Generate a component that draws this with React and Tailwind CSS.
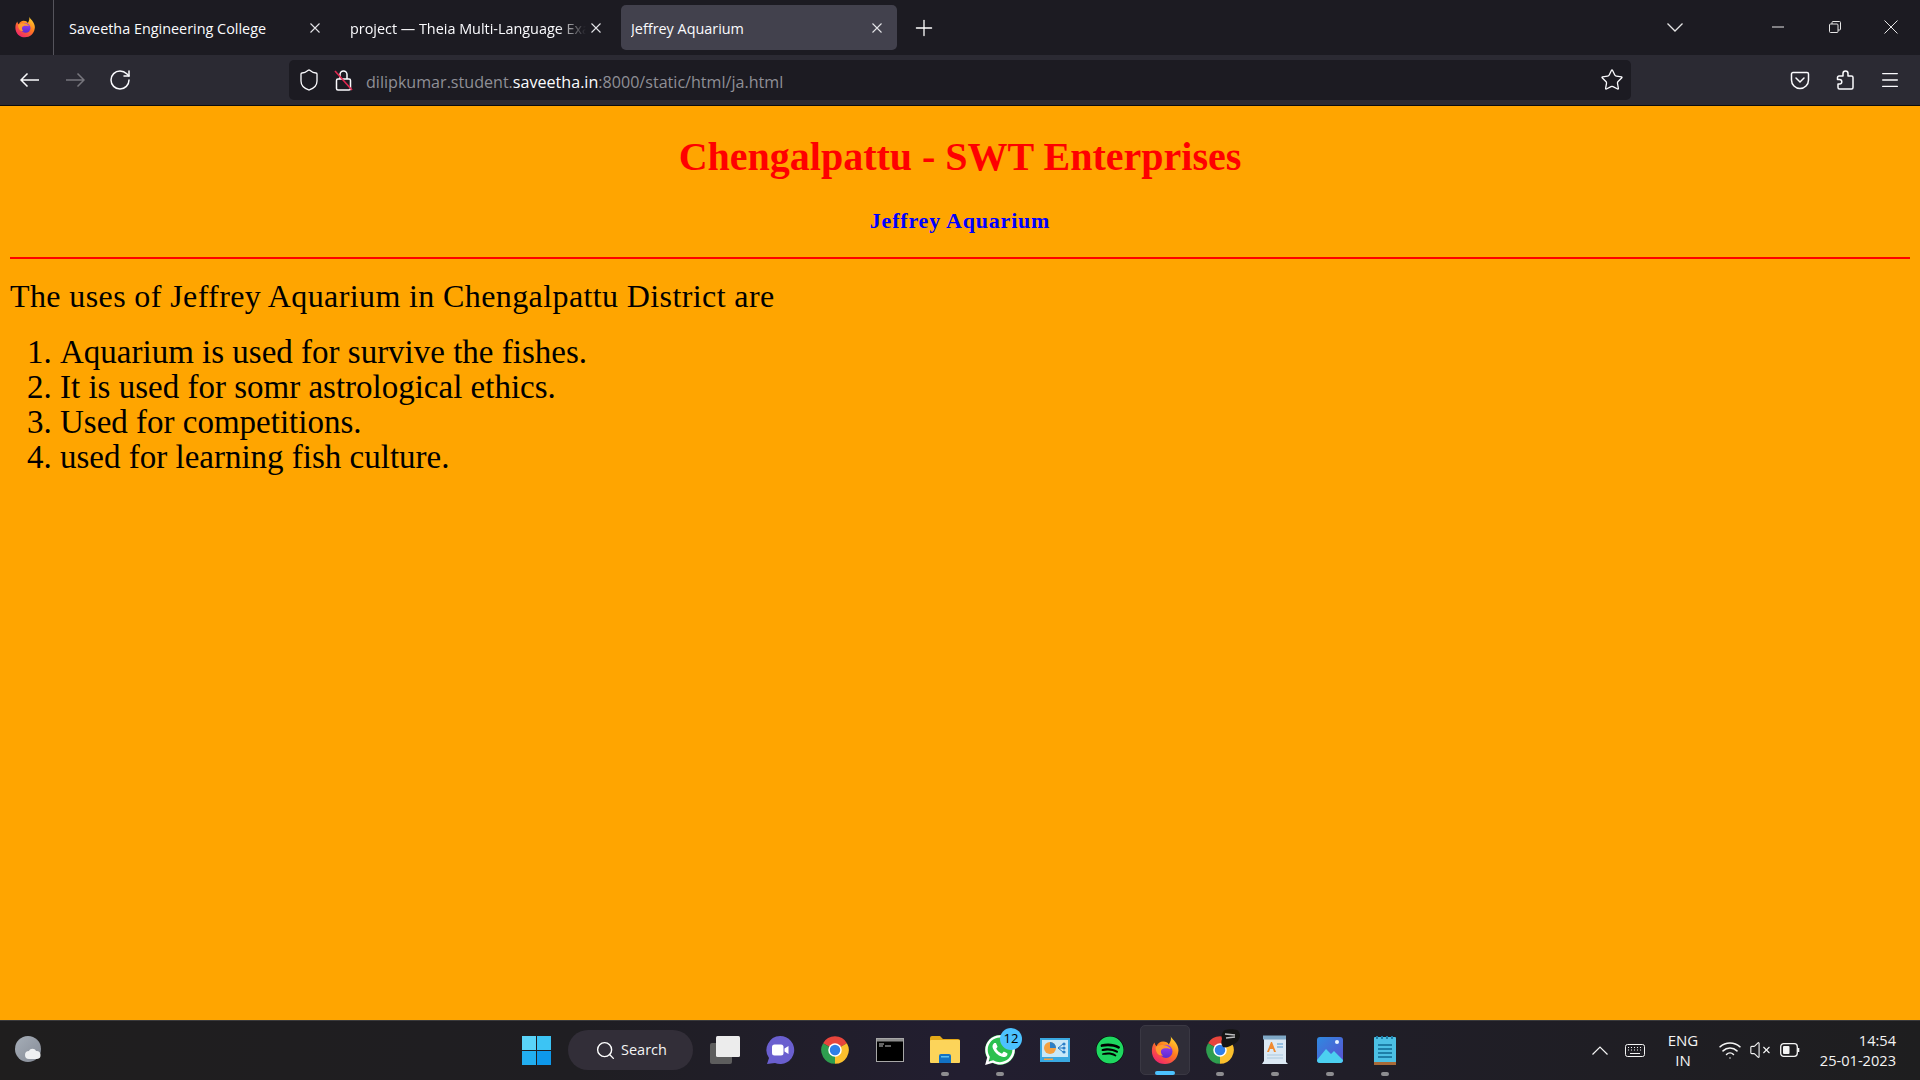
import { FaWhatsapp, FaSpotify } from 'react-icons/fa';
import { Plus, RotateCw, Shield, Star, Menu, Search, Wifi, VolumeX } from 'lucide-react';

const ui = "font-['Open_Sans','Noto_Sans',sans-serif]";

function Firefox({ size = 24 }) {
  return (
    <svg width={size} height={size} viewBox="0 0 32 32">
      <defs>
        <linearGradient id="ffOuter" x1="0.8" y1="0.05" x2="0.2" y2="0.95">
          <stop offset="0" stopColor="#ffd12e" />
          <stop offset="0.45" stopColor="#ff7a1f" />
          <stop offset="1" stopColor="#f0246c" />
        </linearGradient>
        <linearGradient id="ffInner" x1="0.5" y1="0" x2="0.5" y2="1">
          <stop offset="0" stopColor="#9a3cf0" />
          <stop offset="1" stopColor="#5a2bd0" />
        </linearGradient>
      </defs>
      <path d="M22 1c1 3 4 4 6 8 2 3 3 7 2 10-1 7-7 12-14 12C8 31 2 25 2 17c0-4 1-7 3-9 0 2 1 3 2 4 1-3 4-5 7-5 3 0 5 1 6 3 2-3 3-6 2-9z" fill="url(#ffOuter)" />
      <circle cx="17" cy="17.5" r="7" fill="url(#ffInner)" />
      <path d="M6 13c2-2 6-3 9-2 3 0 6 2 7 4-2-1-4-1-6-1-2 0-3 1-4 2-1 2 0 5 2 6-3 0-6-1-7-4-1-2-1-4-1-5z" fill="#ff9a2e" />
    </svg>
  );
}

function Chrome({ size = 30 }) {
  return (
    <svg width={size} height={size} viewBox="0 0 24 24">
      <path d="M12 12 L2.47 6.5 A11 11 0 0 1 21.53 6.5 Z" fill="#e8453c" />
      <path d="M12 12 L21.53 6.5 A11 11 0 0 1 12 23 Z" fill="#fbc02d" />
      <path d="M12 12 L12 23 A11 11 0 0 1 2.47 6.5 Z" fill="#2e9e4f" />
      <circle cx="12" cy="12" r="5.4" fill="#fff" />
      <circle cx="12" cy="12" r="4.2" fill="#2f7fe8" />
    </svg>
  );
}

function CloseIcon({ size = 10, color = '#e4e4e8' }) {
  return (
    <svg width={size} height={size} viewBox="0 0 10 10" stroke={color} strokeWidth="1.1">
      <path d="M0.5 0.5L9.5 9.5M9.5 0.5L0.5 9.5" />
    </svg>
  );
}

function TabItem({ title, active, fade }) {
  return (
    <div className={`flex items-center w-[276px] h-[45px] pl-[10px] pr-[10px] rounded-[5px] ${active ? 'bg-[#42414d]' : ''}`}>
      <span
        className={`pt-[2px] w-[236px] text-[14.4px] text-[#fbfbfe] whitespace-nowrap overflow-hidden ${fade ? '[mask-image:linear-gradient(90deg,#000_88%,transparent)]' : ''}`}
      >
        {title}
      </span>
      <span className="flex-1 flex justify-center">
        <CloseIcon />
      </span>
    </div>
  );
}

function TabStrip() {
  return (
    <div className="flex items-center h-[55px] bg-[#1c1b22] shrink-0">
      <div className="flex items-center justify-center w-[54px] h-full border-r border-[#55545c] pr-[4px] pb-[2px]">
        <Firefox size={22} />
      </div>
      <div className="flex items-center gap-[5px] ml-[5px]">
        <TabItem title="Saveetha Engineering College" />
        <TabItem title="project — Theia Multi-Language Exam" fade />
        <TabItem title="Jeffrey Aquarium" active />
      </div>
      <Plus size={26} strokeWidth={1.2} className="text-white ml-[14px]" />
      <div className="ml-auto flex items-center h-full pb-[1px]">
        <svg width="16" height="9" viewBox="0 0 16 9" fill="none" stroke="#e6e6e6" strokeWidth="1.3" className="mr-[89px]">
          <path d="M0.5 0.5L8 8L15.5 0.5" />
        </svg>
        <svg width="12" height="2" viewBox="0 0 12 2" stroke="#e6e6e6" strokeWidth="1" className="mr-[45px]">
          <path d="M0 1H12" />
        </svg>
        <svg width="12" height="12" viewBox="0 0 12 12" fill="none" stroke="#e6e6e6" strokeWidth="1" className="mr-[43px]">
          <rect x="0.5" y="3" width="8.5" height="8.5" rx="1" />
          <path d="M3 3V1.5a1 1 0 0 1 1-1h6.5a1 1 0 0 1 1 1V8a1 1 0 0 1-1 1H9" />
        </svg>
        <svg width="14" height="14" viewBox="0 0 14 14" stroke="#e6e6e6" strokeWidth="1" className="mr-[22px]">
          <path d="M0.5 0.5L13.5 13.5M13.5 0.5L0.5 13.5" />
        </svg>
      </div>
    </div>
  );
}

function NavArrow({ color, flip }) {
  return (
    <svg width="19" height="14" viewBox="0 0 19 14" fill="none" stroke={color} strokeWidth="1.5" className={flip ? 'rotate-180' : ''}>
      <path d="M1 7H19M7.5 0.5L1 7L7.5 13.5" />
    </svg>
  );
}

function Toolbar() {
  return (
    <div className="flex items-center h-[51px] bg-[#2b2a33] border-b border-[#0c0c0d] shrink-0 pb-[1px]">
      <div className="flex items-center ml-[7.5px]">
        <div className="flex justify-center w-[45px] pr-[2px]"><NavArrow color="#fbfbfe" /></div>
        <div className="flex justify-center w-[45px]"><NavArrow color="#77767d" flip /></div>
        <div className="flex justify-center w-[45px]"><RotateCw size={24} strokeWidth={1.5} className="text-[#fbfbfe]" /></div>
      </div>
      <div className="flex items-center w-[1342px] h-[40px] ml-[146.5px] rounded-[5px] bg-[#1c1b22]">
        <div className="flex justify-center w-[38px]"><Shield size={24} strokeWidth={1.3} className="text-[#fbfbfe] ml-[1px]" /></div>
        <div className="flex justify-center w-[34px]">
          <svg width="20" height="24" viewBox="0 0 20 24" fill="none">
            <rect x="2.5" y="11" width="14" height="11" rx="1.5" stroke="#fbfbfe" strokeWidth="1.5" />
            <path d="M6 11V6.5a3.5 3.5 0 0 1 7 0V11" stroke="#fbfbfe" strokeWidth="1.5" />
            <path d="M1 3l17 19" stroke="#e22850" strokeWidth="1.6" />
          </svg>
        </div>
        <div className={`pl-[5px] pt-[5px] text-[16.1px] text-[#8f8f96] whitespace-nowrap ${ui}`}>
          dilipkumar.student.<span className="text-[#fbfbfe]">saveetha.in</span>:8000/static/html/ja.html
        </div>
        <div className="ml-auto flex justify-center w-[38px]"><Star size={24} strokeWidth={1.3} className="text-[#fbfbfe]" /></div>
      </div>
      <div className="ml-auto flex items-center mr-[7.5px]">
        <div className="flex justify-center w-[45px]">
          <svg width="20" height="20" viewBox="0 0 20 20" fill="none" stroke="#fbfbfe" strokeWidth="1.5">
            <path d="M3 2.5h14A1.5 1.5 0 0 1 18.5 4v6a8.5 8.5 0 0 1-17 0V4A1.5 1.5 0 0 1 3 2.5z" />
            <path d="M6 8l4 4 4-4" strokeLinecap="round" />
          </svg>
        </div>
        <div className="flex justify-center w-[45px]">
          <svg width="18" height="20" viewBox="0 0 18 20" fill="none" stroke="#fbfbfe" strokeWidth="1.5" strokeLinejoin="round">
            <path d="M7 4.5V3.5a2.5 2.5 0 0 1 5 0v2.5h3.5a1.5 1.5 0 0 1 1.5 1.5v10a1.5 1.5 0 0 1-1.5 1.5H3.5A1.5 1.5 0 0 1 2 17.5v-3.5h1.5a2.3 2.3 0 0 0 0-4.6H1.5V7.5A1.5 1.5 0 0 1 3 6h4z" />
          </svg>
        </div>
        <div className="flex justify-center w-[45px]"><Menu size={22} strokeWidth={1.4} className="text-[#fbfbfe]" /></div>
      </div>
    </div>
  );
}

function Page() {
  return (
    <main className="flex-1 bg-[#ffa500] px-[10px] text-black font-['Liberation_Serif',serif]">
      <h1 className="pt-[24px] text-center text-[40px] leading-[54px] font-bold text-[#ff0000]">
        Chengalpattu - SWT Enterprises
      </h1>
      <h3 className="mt-[24px] text-center text-[22px] leading-[26px] font-bold text-[#0000ff] tracking-[0.8px]">
        Jeffrey Aquarium
      </h3>
      <hr className="mt-[23px] border-0 h-[2px] bg-[#ff0000]" />
      <p className="mt-[19px] text-[32px] leading-[36px] tracking-[0.39px]">
        The uses of Jeffrey Aquarium in Chengalpattu District are
      </p>
      <ol className="mt-[21px] pl-[50px] list-decimal text-[33px] leading-[35px]">
        <li>Aquarium is used for survive the fishes.</li>
        <li>It is used for somr astrological ethics.</li>
        <li>Used for competitions.</li>
        <li>used for learning fish culture.</li>
      </ol>
    </main>
  );
}

function Slot({ children, dot, active }) {
  return (
    <div className="relative flex items-center justify-center w-[55px] h-[50px]">
      {active && <span className="absolute inset-y-0 left-[2.5px] right-[2.5px] rounded-[5px] bg-[#2f2d38] border border-[#3a3843]" />}
      <span className="relative flex items-center justify-center">{children}</span>
      {dot && <span className="absolute bottom-[-1px] left-[23.5px] w-[8px] h-[4px] rounded-full bg-[#8d8d90]" />}
      {active && <span className="absolute bottom-0 left-[17.5px] w-[20px] h-[4px] rounded-full bg-[#4cc2ff]" />}
    </div>
  );
}

function Taskbar() {
  return (
    <footer className={`flex items-center h-[60px] pb-[1px] shrink-0 border-t border-[#3a3a3c] bg-[linear-gradient(90deg,#1f1e1e_0%,#1f1e22_30%,#221e30_50%,#201e28_70%,#1e1e1f_100%)] text-[#f4f4f4] ${ui}`}>
      <div className="ml-[15px] w-[28px] h-[28px]">
        <svg width="28" height="28" viewBox="0 0 28 28">
          <defs>
            <linearGradient id="moon" x1="0" y1="0" x2="1" y2="1">
              <stop offset="0" stopColor="#a6aeb8" />
              <stop offset="1" stopColor="#858b96" />
            </linearGradient>
          </defs>
          <circle cx="13" cy="13" r="13" fill="url(#moon)" />
          <path d="M14 23a4 4 0 0 1 0-8c1-3 6-3 7 0a4 4 0 0 1 1 8z" fill="#eef0f2" />
        </svg>
      </div>

      <div className="ml-[479px] grid grid-cols-2 gap-[1px] w-[29px] h-[29px]">
        <span className="bg-[#5ad4f8]" />
        <span className="bg-[#3cc4f4]" />
        <span className="bg-[#22aef0]" />
        <span className="bg-[#0e98ea]" />
      </div>

      <div className="flex items-center ml-[17px] w-[125px] h-[40px] pl-[27px] rounded-full bg-[#322e38]">
        <Search size={21} strokeWidth={1.6} className="text-white" />
        <span className="ml-[5px] text-[14.5px]">Search</span>
      </div>

      <div className="flex items-center ml-[4.5px]">
        <Slot>
          <svg width="30" height="28" viewBox="0 0 30 28">
            <rect x="0" y="7" width="22" height="21" rx="2" fill="#5d5d5d" />
            <rect x="6" y="0" width="24" height="21" rx="1.5" fill="#ececec" />
          </svg>
        </Slot>
        <Slot>
          <svg width="30" height="30" viewBox="0 0 30 30">
            <path d="M15 1a14 14 0 1 1-5 27l-8 1 2-6A14 14 0 0 1 15 1z" fill="#6a5fcf" />
            <rect x="7" y="9.5" width="11.5" height="11" rx="2.5" fill="#fff" />
            <path d="M19.5 13.5l4-2.5v8l-4-2.5z" fill="#fff" />
          </svg>
        </Slot>
        <Slot><Chrome size={30} /></Slot>
        <Slot>
          <svg width="28" height="24" viewBox="0 0 28 24">
            <rect x="0.5" y="0.5" width="27" height="23" fill="#000" stroke="#a7a7a7" />
            <rect x="1" y="1" width="26" height="2.5" fill="#8d8d8d" />
            <path d="M3 6h5M3 8h4M9 8h6" stroke="#c6c6c6" strokeWidth="1" />
          </svg>
        </Slot>
        <Slot dot>
          <svg width="30" height="28" viewBox="0 0 30 28">
            <path d="M0 2a2 2 0 0 1 2-2h8l3 3h15a2 2 0 0 1 2 2v3H0z" fill="#e3a818" />
            <rect x="0" y="4" width="30" height="23" rx="1" fill="#fcd45a" />
            <path d="M9 27v-7a2 2 0 0 1 2-2h8a2 2 0 0 1 2 2v7z" fill="#1272c4" />
            <rect x="11" y="20" width="8" height="1.5" fill="#5cc0f0" />
          </svg>
        </Slot>
        <Slot dot>
          <div className="relative flex items-center justify-center w-[30px] h-[30px] rounded-full bg-[#2cc04f]">
            <FaWhatsapp size={34} className="text-white shrink-0" />
            <span className="absolute top-[-7px] right-[-7px] flex items-center justify-center w-[22px] h-[22px] rounded-full bg-[#4cc2ff] text-[13px] text-black">12</span>
          </div>
        </Slot>
        <Slot>
          <svg width="30" height="24" viewBox="0 0 30 24">
            <rect width="30" height="24" fill="#3aa8e0" />
            <rect x="2" y="2" width="26" height="17" fill="#c8e8f8" />
            <circle cx="10" cy="10" r="6" fill="#f4a040" />
            <path d="M10 10V4a6 6 0 0 1 6 6z" fill="#2a7fc8" />
            <path d="M18 10l5-4M18 10l5 0M18 10l5 4" stroke="#2a7fc8" strokeWidth="1" />
            <circle cx="24" cy="6" r="1.6" fill="#2a7fc8" />
            <circle cx="24" cy="10" r="1.6" fill="#2a7fc8" />
            <circle cx="24" cy="14" r="1.6" fill="#2a7fc8" />
            <rect x="4" y="20.5" width="9" height="1.5" fill="#f4a040" />
          </svg>
        </Slot>
        <Slot>
          <div className="flex items-center justify-center w-[28px] h-[28px] rounded-full bg-[#000]">
            <FaSpotify size={28} className="text-[#1ed760]" />
          </div>
        </Slot>
        <Slot active><Firefox size={30} /></Slot>
        <Slot dot>
          <div className="relative">
            <Chrome size={30} />
            <svg width="21" height="20" viewBox="0 0 21 20" className="absolute top-[-6px] right-[-6px]">
              <path d="M5 1c3-1 9-1 12 0 3 2 4 6 2 9-1 3-4 5-7 6-3 2-7 3-9 2-2-2-2-6-1-8-1-3 0-7 3-9z" fill="#141414" />
              <path d="M5 5l10 1M6 9l9-1" stroke="#bdbdbd" strokeWidth="1.6" />
            </svg>
          </div>
        </Slot>
        <Slot dot>
          <svg width="26" height="30" viewBox="0 0 26 30">
            <path d="M2 3h22v24l2 2H0l2-3z" fill="#dce9f4" />
            <rect x="1" y="0.5" width="23" height="4" fill="#7fa8c6" />
            <path d="M5 17l4-10h1l4 10h-2l-1-3H8l-1 3z" fill="#f08a30" />
            <path d="M15 9h6M15 12h6" stroke="#7fb4dc" strokeWidth="1.4" />
            <path d="M5 20h16M5 23h16" stroke="#a9c8de" strokeWidth="1" />
          </svg>
        </Slot>
        <Slot dot>
          <svg width="26" height="26" viewBox="0 0 26 26">
            <defs>
              <linearGradient id="photosBg" x1="0" y1="0" x2="1" y2="1">
                <stop offset="0" stopColor="#2f8ae0" />
                <stop offset="1" stopColor="#5a4fd0" />
              </linearGradient>
            </defs>
            <rect width="26" height="26" rx="3" fill="url(#photosBg)" />
            <circle cx="20" cy="5" r="2" fill="#e8f4ff" />
            <path d="M0 23l9-11 5 5 3-3 9 9v0a3 3 0 0 1-3 3H3a3 3 0 0 1-3-3z" fill="#4cd0f0" />
          </svg>
        </Slot>
        <Slot dot>
          <svg width="22" height="30" viewBox="0 0 22 30">
            <rect y="2" width="22" height="26" rx="1" fill="#4cc0e4" />
            <rect y="27" width="22" height="3" fill="#a86a38" />
            <path d="M3 1v3M8 1v3M13 1v3M18 1v3" stroke="#1d7ea8" strokeWidth="2" />
            <path d="M4 10h14M4 14h14M4 18h14M4 22h14" stroke="#0f6a92" strokeWidth="1.6" />
          </svg>
        </Slot>
      </div>

      <div className="ml-auto flex items-center">
        <div className="flex justify-center w-[30px]">
          <svg width="16" height="9" viewBox="0 0 16 9" fill="none" stroke="#f4f4f4" strokeWidth="1.2">
            <path d="M0.5 8.5L8 1L15.5 8.5" />
          </svg>
        </div>
        <div className="flex justify-center w-[40px]">
          <svg width="20" height="13" viewBox="0 0 20 13" fill="none" stroke="#f4f4f4" strokeWidth="1">
            <rect x="0.5" y="0.5" width="19" height="12" rx="2" />
            <path d="M3 3.5h1M6 3.5h1M9 3.5h1M12 3.5h1M15 3.5h1M3 6h1M6 6h1M9 6h1M12 6h1M15 6h1M5 9.5h10" />
          </svg>
        </div>
        <div className="w-[56px] pb-[1px] text-center text-[15px] leading-[20px]">
          <div>ENG</div>
          <div>IN</div>
        </div>
        <div className="flex justify-center w-[32px] ml-[3px]"><Wifi size={24} strokeWidth={1.5} /></div>
        <div className="flex justify-center w-[28px]"><VolumeX size={22} strokeWidth={1.2} /></div>
        <div className="flex justify-center w-[32px]">
          <svg width="20" height="14" viewBox="0 0 20 14" fill="none">
            <rect x="0.7" y="0.7" width="16.6" height="12.6" rx="3" stroke="#f4f4f4" strokeWidth="1.3" />
            <rect x="3" y="3" width="6.5" height="8" rx="1" fill="#f4f4f4" />
            <path d="M18.5 5v4" stroke="#f4f4f4" strokeWidth="1.6" />
          </svg>
        </div>
        <div className="w-[90px] pb-[1px] text-right text-[14.6px] leading-[20px]">
          <div>14:54</div>
          <div>25-01-2023</div>
        </div>
        <div className="w-[24px]" />
      </div>
    </footer>
  );
}

export default function App() {
  return (
    <div className="flex flex-col h-screen overflow-hidden">
      <div className={ui}>
        <TabStrip />
      </div>
      <Toolbar />
      <Page />
      <Taskbar />
    </div>
  );
}
